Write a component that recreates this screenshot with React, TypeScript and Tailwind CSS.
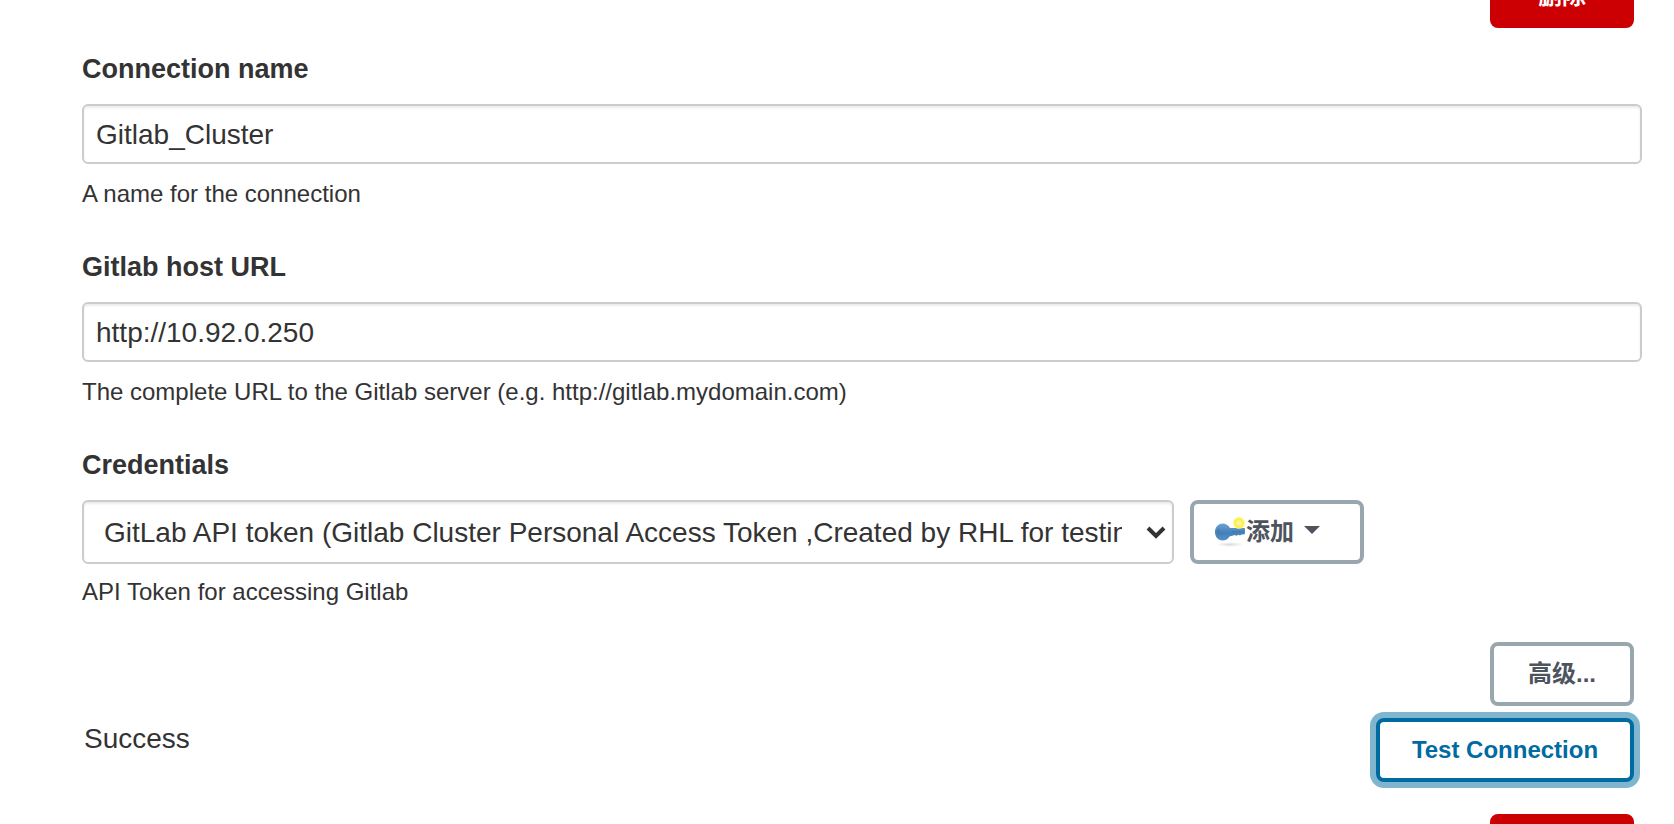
import React, { useState } from 'react';

const FONT = 'font-["Liberation_Sans","Noto_Sans_CJK_SC",sans-serif]';

const inputClass =
  'block w-full rounded-[6px] border-2 border-[#cccccc] bg-white pt-0.5 text-[28px] leading-[34px] text-[#333333] shadow-[inset_0_2px_2px_rgba(0,0,0,0.075)] outline-none';

const buttonClass = 'h-16 rounded-[8px] border-4 text-[24px] leading-[32px] font-bold';

const KeyIcon: React.FC = () => (
  <svg width="32" height="32" viewBox="0 0 32 32" aria-hidden="true">
    <defs>
      <linearGradient id="keyBlue" x1="0" y1="0" x2="0" y2="1">
        <stop offset="0" stopColor="#6ba3d3" />
        <stop offset="0.55" stopColor="#4380bb" />
        <stop offset="1" stopColor="#5590c6" />
      </linearGradient>
      <radialGradient id="keyShadow">
        <stop offset="0" stopColor="#000000" stopOpacity="0.14" />
        <stop offset="1" stopColor="#000000" stopOpacity="0" />
      </radialGradient>
      <radialGradient id="keySpark">
        <stop offset="0" stopColor="#fffbb8" />
        <stop offset="0.35" stopColor="#fff47a" />
        <stop offset="0.6" stopColor="#fdf04a" />
        <stop offset="0.8" stopColor="#fff566" />
        <stop offset="1" stopColor="#fff98c" stopOpacity="0" />
      </radialGradient>
    </defs>
    <ellipse cx="16" cy="28.500" rx="14" ry="2.500" fill="url(#keyShadow)" />
    <path
      d="M8.500 7.500c3.200 0 5.800 1.500 7.500 4.500h14c.8 0 1 .5 1 1v3.500c0 1-.6 2-1.500 2h-2l-1.500 1-1.500-.8-2 1-2-.8-2 .8c-1 .3-2 .3-3 .8-1.500 2.500-3.800 4-7 4C4 24.500 1 20.500 1 16s3.200-8.500 7.500-8.500z"
      fill="url(#keyBlue)"
    />
    <ellipse cx="4.500" cy="16" rx="1.500" ry="3" fill="#4b7ba6" />
    <path d="M18 15.500h11" stroke="#3f79b1" strokeWidth="1" />
    <circle cx="25" cy="7" r="6.500" fill="url(#keySpark)" />
  </svg>
);

type FieldProps = {
  id: string;
  label: string;
  help: string;
  children: React.ReactNode;
};

const Field: React.FC<FieldProps> = ({ id, label, help, children }) => (
  <div className="mb-[34px]">
    <label htmlFor={id} className="mb-3.5 block pt-0.5 text-[27px] leading-[42px] font-bold">
      {label}
    </label>
    {children}
    <p className="mt-3.5 text-[24px] leading-[32px]">{help}</p>
  </div>
);

const DeleteButton: React.FC = () => (
  <button type="button" className={`${buttonClass} w-36 border-[#cc0003] bg-[#cc0003] text-white`}>
    删除
  </button>
);

const App: React.FC = () => {
  const [name, setName] = useState('Gitlab_Cluster');
  const [url, setUrl] = useState('http://10.92.0.250');

  return (
    <div className={`${FONT} h-screen overflow-hidden bg-white pr-8 pl-[82px] text-[#333333]`}>
      {/* the form is scrolled, the first delete button is partly out of view */}
      <div className="-mt-9 mb-[18px] flex justify-end pr-2">
        <DeleteButton />
      </div>

      <Field id="name" label="Connection name" help="A name for the connection">
        <input
          id="name"
          type="text"
          value={name}
          onChange={(e) => setName(e.target.value)}
          className={`${inputClass} h-[60px] px-3`}
        />
      </Field>

      <Field
        id="url"
        label="Gitlab host URL"
        help="The complete URL to the Gitlab server (e.g. http://gitlab.mydomain.com)"
      >
        <input
          id="url"
          type="text"
          value={url}
          onChange={(e) => setUrl(e.target.value)}
          className={`${inputClass} h-[60px] px-3`}
        />
      </Field>

      <Field id="credentials" label="Credentials" help="API Token for accessing Gitlab">
        <div className="-mb-0.5 flex gap-4">
          <div className="relative w-[70%]">
            <select id="credentials" className={`${inputClass} h-16 appearance-none pr-[50px] pl-5`}>
              <option>
                GitLab API token (Gitlab Cluster Personal Access Token ,Created by RHL for testing)
              </option>
            </select>
            <svg
              className="pointer-events-none absolute top-[26px] right-2"
              width="20"
              height="14"
              viewBox="0 0 20 14"
              fill="none"
              aria-hidden="true"
            >
              <path d="M2 2l8 8 8-8" stroke="#333333" strokeWidth="4" />
            </svg>
          </div>
          <button
            type="button"
            className={`${buttonClass} flex w-[174px] items-center border-[#98a6ad] bg-white pl-5 text-[#4d545d]`}
          >
            <KeyIcon />
            添加
            <svg className="mb-1 ml-2.5" width="16" height="8" viewBox="0 0 16 8" aria-hidden="true">
              <path d="M0 0h16l-8 8z" fill="#4d545d" />
            </svg>
          </button>
        </div>
      </Field>

      <div className="flex justify-end pr-2">
        <button type="button" className={`${buttonClass} w-36 border-[#98a6ad] bg-white text-[#4d545d]`}>
          高级...
        </button>
      </div>

      <div className="mt-3 flex items-start justify-between pr-2 pl-0.5">
        <div className="text-[28px] leading-[42px]">Success</div>
        <button
          type="button"
          className={`${buttonClass} w-[258px] border-[#006ba0] bg-white text-[#006ba0] shadow-[0_0_0_6px_#80b5d0]`}
        >
          Test Connection
        </button>
      </div>

      <div className="mt-8 flex justify-end pr-2">
        <DeleteButton />
      </div>
    </div>
  );
};

export default App;
